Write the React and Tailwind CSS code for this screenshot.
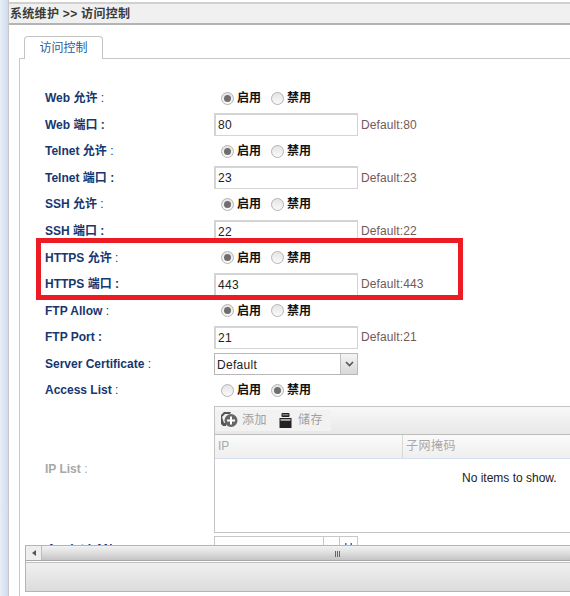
const FONT = "font-['Liberation_Sans','Noto_Sans_CJK_SC',sans-serif]";

function Radio({ checked }) {
  return (
    <span className="flex h-[13px] w-[13px] items-center justify-center rounded-full border border-[#b4b4b4] bg-gradient-to-b from-[#e4e4e4] to-[#fafafa]">
      {checked && <span className="h-[7px] w-[7px] rounded-full bg-[#6e6e6e]" />}
    </span>
  );
}

function RadioPair({ on = true }) {
  return (
    <div className="flex items-center pl-[7px] text-[12px] font-bold text-[#111]">
      <Radio checked={on} />
      <span className="ml-[3px] w-[34px]">启用</span>
      <Radio checked={!on} />
      <span className="ml-[3px]">禁用</span>
    </div>
  );
}

function TextBox({ value }) {
  return (
    <div className="flex h-[23px] w-[144px] items-center border-2 border-b border-r border-[#d4d4d4] bg-white pl-[2px] text-[12px] tracking-[0.3px] text-[#222]">
      {value}
    </div>
  );
}

function Row({ label, colonBold, children, hint }) {
  return (
    <div className="flex h-[26.55px] items-center">
      <div className="w-[169px] shrink-0 text-[12px] font-bold text-[#17376f]">
        {label}
        <span className={colonBold ? "" : "font-normal"}> :</span>
      </div>
      {children}
      {hint && <span className="ml-[3px] text-[12px] tracking-[0.1px] text-[#755858]">{hint}</span>}
    </div>
  );
}

function IpGrid() {
  return (
    <div className="h-[127px] w-[400px] shrink-0 border border-[#c4c4c4] bg-white">
      <div className="flex h-[28px] items-center border-b border-[#bdbdbd] bg-gradient-to-b from-[#f8f8f8] to-[#e8e8e8] pl-[1px] text-[12px] text-[#a0a0a0]">
        <div className="flex h-[21px] w-[115px] items-center bg-[#f2f2f2] pl-[4px]">
          <svg width="20" height="18" viewBox="0 0 20 18">
            <path d="M2 6 L5 3 H10 L11 1 H7 L4 1 L1 4 V13 L3 15 H6 V12 H4 Z" fill="#555" />
            <circle cx="11" cy="9.5" r="6.5" fill="#666" />
            <path d="M10 5.5h2v3h3v2h-3v3h-2v-3H7v-2h3z" fill="#fff" />
          </svg>
          <span className="ml-[2px] w-[37px] tracking-[0.5px]">添加</span>
          <svg width="13" height="15" viewBox="0 0 13 15">
            <rect x="2.5" y="0" width="8" height="4" rx="1" fill="#222" />
            <rect x="3.5" y="1.2" width="6" height="1.2" fill="#999" />
            <rect x="0.5" y="5" width="12" height="10" fill="#222" />
            <rect x="1.5" y="6.2" width="10" height="1.5" fill="#ccc" />
          </svg>
          <span className="ml-[6px] tracking-[0.5px]">储存</span>
        </div>
      </div>
      <div className="flex h-[24px] items-center border-b border-[#d3deee] bg-gradient-to-b from-[#fafafa] to-[#efefef] text-[12px] text-[#a8a8a8]">
        <div className="flex h-full w-[188px] items-center border-r border-[#d8d8d8] pl-[3px]">IP</div>
        <div className="pl-[3px] tracking-[0.5px]">子网掩码</div>
      </div>
      <div className="pl-[247px] pt-[10px] text-[12px] text-[#222]">No items to show.</div>
    </div>
  );
}

export default function App() {
  return (
    <div className={`relative h-[596px] w-[570px] overflow-hidden bg-white ${FONT}`}>
      <div className="flex h-full">
        <div className="w-[8px] shrink-0 bg-gradient-to-r from-[#e8eef7] to-[#cfdcef]" />
        <div className="flex min-w-0 flex-1 flex-col border-l border-[#c8c8c8] pt-[2px]">
          <div className="flex h-[23px] shrink-0 items-center border-y-2 border-t-[#d0d0d0] border-b-[#b4b4b4] bg-[#f0f0f0] pl-[1px] text-[12px] font-bold tracking-[0.3px] text-[#3a3a3a]">
            系统维护 &gt;&gt; 访问控制
          </div>
          <div className="flex-1 pl-[10px] pt-[11px]">
            <div className="relative z-10 ml-[5px] flex h-[23px] w-[79px] items-center justify-center rounded-t-[4px] border border-b-0 border-[#c4c4c4] bg-white text-[12px] text-[#2f5a9a]">
              访问控制
            </div>
            <div className="-mt-[1px] h-[600px] border-l border-t border-[#c8c8c8] pl-[25px] pt-[26px]">
              <Row label="Web 允许"><RadioPair /></Row>
              <Row label="Web 端口" colonBold hint="Default:80"><TextBox value="80" /></Row>
              <Row label="Telnet 允许"><RadioPair /></Row>
              <Row label="Telnet 端口" colonBold hint="Default:23"><TextBox value="23" /></Row>
              <Row label="SSH 允许"><RadioPair /></Row>
              <Row label="SSH 端口" colonBold hint="Default:22"><TextBox value="22" /></Row>
              <Row label="HTTPS 允许"><RadioPair /></Row>
              <Row label="HTTPS 端口" colonBold hint="Default:443"><TextBox value="443" /></Row>
              <Row label="FTP Allow"><RadioPair /></Row>
              <Row label="FTP Port" colonBold hint="Default:21"><TextBox value="21" /></Row>
              <Row label="Server Certificate">
                <div className="flex h-[22px] w-[144px] border border-[#b8b8b8] bg-white text-[12px] tracking-[0.3px] text-[#222]">
                  <span className="flex flex-1 items-center pl-[2px] pt-[2px]">Default</span>
                  <span className="flex w-[17px] items-center justify-center border-l border-[#c0c0c0] bg-gradient-to-b from-[#f4f4f4] to-[#d8d8d8]">
                    <svg width="9" height="6" viewBox="0 0 9 6">
                      <path d="M1 1 L4.5 4.5 L8 1" fill="none" stroke="#555" strokeWidth="1.6" />
                    </svg>
                  </span>
                </div>
              </Row>
              <Row label="Access List"><RadioPair on={false} /></Row>
              <div className="flex h-[131px] items-center">
                <div className="w-[169px] shrink-0 text-[12px] font-bold text-[#a8a8a8]">
                  IP List<span className="font-normal"> :</span>
                </div>
                <IpGrid />
              </div>
              <div className="mt-[1px] flex items-start">
                <div className="w-[169px] shrink-0 pl-[2px] pt-[4px] text-[12px] font-bold text-[#17376f]">Applet LAN :</div>
                <div className="flex h-[20px] w-[144px] border border-[#c8c8c8]">
                  <span className="flex-1" />
                  <span className="w-[17px] border-x border-[#c8c8c8]" />
                  <span className="flex w-[17px] justify-center pt-[5px]">
                    <svg width="9" height="4" viewBox="0 0 9 4">
                      <path d="M1 1h1.5v2H1zM6.5 1H8v2H6.5z" fill="#3f6fb5" />
                    </svg>
                  </span>
                </div>
              </div>
            </div>
          </div>
        </div>
      </div>

      {/* red highlight drawn over the form */}
      <div className="absolute left-[36px] top-[238px] h-[62px] w-[427px] border-[5px] border-[#ed1c24]" />

      {/* horizontal scrollbar and status bar sitting over the content */}
      <div className="absolute left-[25px] top-[545px] h-[47px] w-[545px] border-y border-l border-[#b4b4b4] bg-white">
        <div className="flex h-[15px] border-b border-[#a8a8a8] bg-gradient-to-b from-[#f2f2f2] via-[#dedede] to-[#c4c4c4]">
          <span className="flex w-[16px] items-center justify-center border-r border-[#bdbdbd] bg-[#eeeeee]">
            <span className="h-0 w-0 border-y-[3px] border-r-[4px] border-y-transparent border-r-[#555]" />
          </span>
          <span className="ml-[293px] flex items-center gap-[1px] pt-[1px]">
            <span className="h-[6px] w-px bg-[#666]" />
            <span className="h-[6px] w-px bg-[#666]" />
            <span className="h-[6px] w-px bg-[#666]" />
          </span>
        </div>
        <div className="mt-[1px] h-[29px] border-t border-[#c0c0c0] bg-gradient-to-b from-[#f0f0f0] to-[#dcdcdc]" />
      </div>
    </div>
  );
}
